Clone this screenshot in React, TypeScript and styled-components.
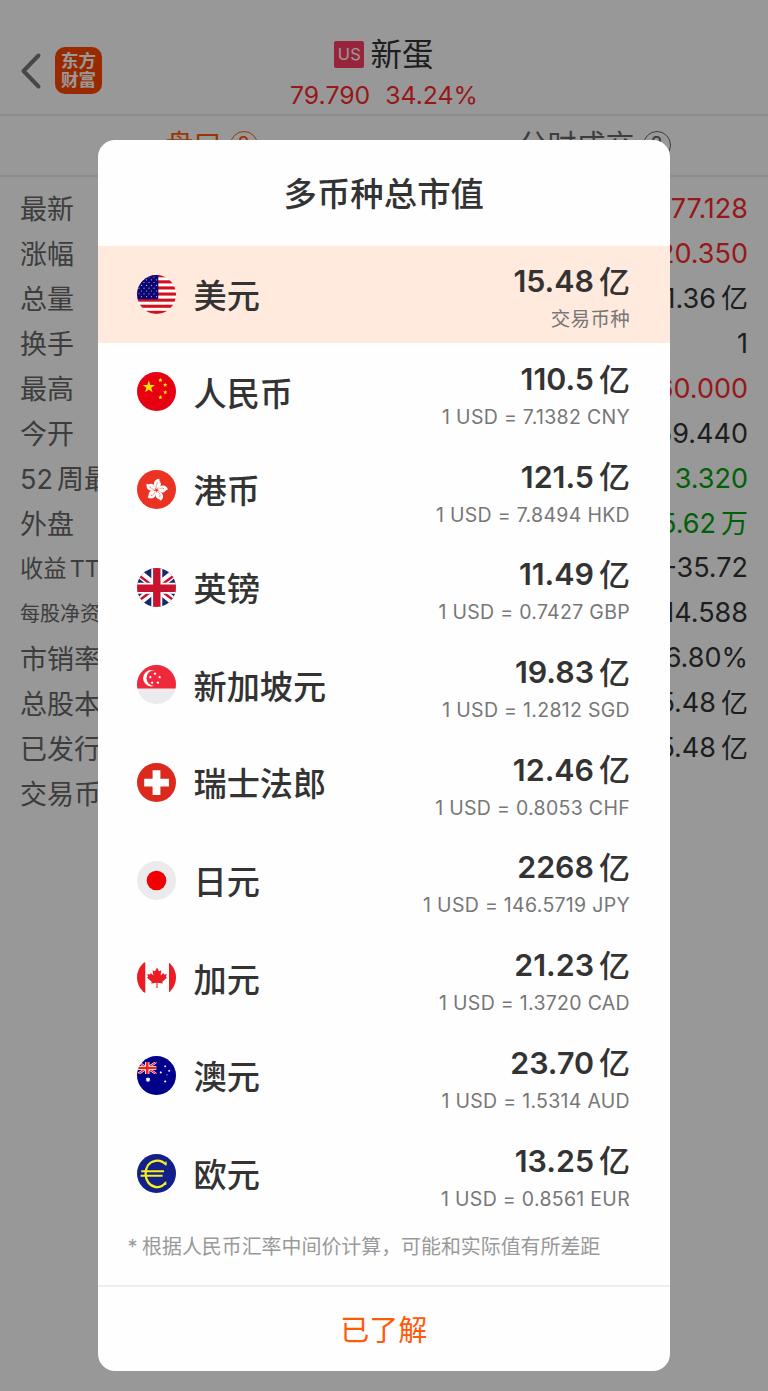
import React from 'react';
import styled, { createGlobalStyle } from 'styled-components';

const GlobalStyle = createGlobalStyle`
  * { box-sizing: border-box; }
  body {
    margin: 0;
    background: #fff;
    font-family: Inter, "Noto Sans CJK SC", sans-serif;
    color: #333;
  }
`;

const Screen = styled.div`
  position: relative;
  width: 768px;
  height: 1391px;
  overflow: hidden;
  background: #fefefe;
`;

const Header = styled.header`
  display: grid;
  grid-template-columns: 120px 1fr 120px;
  height: 116px;
  padding-top: 36px;
  border-bottom: 2px solid #ececee;
`;

const HeaderLeft = styled.div`
  display: flex;
  align-items: flex-start;
  gap: 13px;
  padding: 10.5px 0 0 19px;
`;

const BackIcon = styled.svg`
  width: 23px;
  height: 40px;
  margin-top: 4px;
  fill: none;
  stroke: #777;
  stroke-width: 4;
  stroke-linecap: round;
  stroke-linejoin: round;
`;

const Logo = styled.div`
  display: grid;
  place-content: center;
  width: 47px;
  height: 47px;
  border-radius: 10px;
  background: #ff4600;
  color: #fff;
  font-size: 17.5px;
  font-weight: 700;
  line-height: 19px;
`;

const Quote = styled.div`
  display: flex;
  flex-direction: column;
  align-items: center;
`;

const StockName = styled.div`
  display: flex;
  align-items: center;
  gap: 6px;
  height: 37px;
  font-size: 31.5px;
  line-height: 37px;
`;

const Market = styled.span`
  width: 30px;
  height: 27px;
  border-radius: 2px;
  background: #fc3d62;
  color: #fff;
  font-size: 16.5px;
  line-height: 27px;
  letter-spacing: 0.4px;
  text-align: center;
`;

const StockPrice = styled.div`
  display: flex;
  gap: 15px;
  color: #fa2a2c;
  font-size: 24.8px;
  line-height: 30px;
  margin-top: 7px;
`;

const Tabs = styled.nav`
  display: grid;
  grid-template-columns: 1fr 1fr;
  height: 61px;
  border-bottom: 2px solid #ececee;
`;

const Tab = styled.div<{ $active?: boolean }>`
  display: flex;
  align-items: flex-start;
  justify-content: center;
  padding-left: ${(p) => (p.$active ? 3 : 1)}px;
  color: ${(p) => (p.$active ? '#ff5a0a' : '#666')};
  font-size: ${(p) => (p.$active ? 28 : 29)}px;
  line-height: 59px;
`;

const TabLabel = styled.span`
  position: relative;
`;

const Help = styled.span`
  position: absolute;
  left: calc(100% + 8px);
  top: 50%;
  width: 28px;
  height: 28px;
  margin-top: -15px;
  border: 1.5px solid currentColor;
  border-radius: 50%;
  font-size: 21px;
  line-height: 26px;
  text-align: center;
`;

const Stats = styled.dl`
  margin: 0;
  padding: 9px 20px 0;
`;

const Stat = styled.div`
  display: flex;
  align-items: center;
  justify-content: space-between;
  height: 44.95px;
`;

const StatLabel = styled.dt<{ $size?: number }>`
  padding-bottom: 1px;
  color: #666;
  font-size: ${(p) => p.$size ?? 27}px;
  word-spacing: -3.5px;
`;

const StatValue = styled.dd<{ $tone?: 'up' | 'down' }>`
  display: flex;
  align-items: center;
  margin: 0;
  font-size: 27px;
  color: ${(p) => (p.$tone === 'up' ? '#fa2a2c' : p.$tone === 'down' ? '#00a00a' : '#333')};
`;

const Unit = styled.span`
  margin: -3px 0 0 5px;
`;

const Overlay = styled.div`
  position: absolute;
  inset: 0;
  display: flex;
  align-items: flex-start;
  padding: 140px 98.5px 0 98px;
  background: rgba(0, 0, 0, 0.4);
`;

const Dialog = styled.section`
  flex: 1;
  height: 1231px;
  display: flex;
  flex-direction: column;
  border-radius: 17px;
  background: #fefefe;
  overflow: hidden;
`;

const Title = styled.h1`
  margin: 0;
  height: 105.5px;
  font-size: 33.4px;
  font-weight: 500;
  line-height: 108px;
  text-align: center;
`;

const Row = styled.div<{ $selected?: boolean }>`
  display: flex;
  align-items: center;
  height: 97.7px;
  padding: 0 39.5px 0 39px;
  background: ${(p) => (p.$selected ? '#ffeadd' : 'transparent')};
`;

const Flag = styled.svg`
  width: 39px;
  height: 39px;
  margin-top: -0.4px;
`;

const Name = styled.span`
  margin-left: 17.5px;
  padding-bottom: 2px;
  font-size: 33.2px;
  font-weight: 500;
`;

const Amounts = styled.div`
  display: flex;
  flex-direction: column;
  align-items: flex-end;
  margin-left: auto;
  padding-top: 12px;
`;

const Amount = styled.div`
  display: flex;
  align-items: center;
  height: 38px;
  font-size: 30.4px;
  font-weight: 600;
`;

const AmountUnit = styled.span`
  margin: -4px 0 0 5px;
  font-size: 31px;
  font-weight: 500;
`;

const Rate = styled.div`
  height: 38px;
  color: #777;
  font-size: 19.5px;
  line-height: 39px;
  letter-spacing: 0.3px;
`;

const Note = styled.p`
  margin: 0;
  padding-left: 29.5px;
  height: 63px;
  color: #999;
  font-size: 19.93px;
  line-height: 51px;
  word-spacing: -1px;
  white-space: nowrap;
`;

const Confirm = styled.button`
  flex: 1;
  padding: 0 0 3px;
  border: 0;
  border-top: 2px solid #eee;
  background: transparent;
  color: #ff5a0a;
  font: inherit;
  font-size: 29px;
`;

const starPoints = (cx: number, cy: number, r: number, n = 5, inner = 0.4, rot = -90) =>
  Array.from({ length: n * 2 }, (_, i) => {
    const a = ((rot + (i * 180) / n) * Math.PI) / 180;
    const q = i % 2 ? r * inner : r;
    return `${(cx + q * Math.cos(a)).toFixed(2)},${(cy + q * Math.sin(a)).toFixed(2)}`;
  }).join(' ');

const UnionJack = () => (
  <>
    <rect width="39" height="39" fill="#16296b" />
    <path d="M0 4L39 35M39 4L0 35" stroke="#fff" strokeWidth="8" />
    <path d="M0 6L16 18M39 6L23 18M0 34L16 22M39 34L23 22" stroke="#c8142f" strokeWidth="2.4" />
    <path d="M19.8 0V39M0 20.2H39" stroke="#fff" strokeWidth="11" />
    <path d="M19.8 0V39M0 20.2H39" stroke="#c8142f" strokeWidth="7.4" />
  </>
);

const art: Record<string, React.ReactNode> = {
  us: (
    <>
      <rect width="39" height="39" fill="#fff" />
      {[0, 1, 2, 3, 4, 5, 6].map((i) => (
        <rect key={i} y={-0.8 + i * 6.1} width="39" height="3.1" fill="#d4101c" />
      ))}
      <rect width="21.3" height="24.3" fill="#0b0672" />
      {[0, 1, 2, 3, 4, 5, 6, 7].map((r) =>
        [0, 1, 2, 3].map((c) => (
          <circle key={`${r}-${c}`} cx={2 + c * 5 + (r % 2) * 2.5} cy={2 + r * 2.8} r="0.62" fill="#b9b6df" />
        )),
      )}
    </>
  ),
  cn: (
    <>
      <rect width="39" height="39" fill="#e60012" />
      <g fill="#ffe600">
        <polygon points={starPoints(11.8, 15, 6.4)} />
        <polygon points={starPoints(23.4, 8.2, 2.2, 5, 0.5)} />
        <polygon points={starPoints(28.2, 13, 2.2, 5, 0.5)} />
        <polygon points={starPoints(28.2, 20.3, 2.2, 5, 0.5)} />
        <polygon points={starPoints(23.4, 25.3, 2.2, 5, 0.5)} />
      </g>
    </>
  ),
  hk: (
    <>
      <rect width="39" height="39" fill="#ea3323" />
      {[0, 72, 144, 216, 288].map((a) => (
        <g key={a} transform={`translate(19.5 20) rotate(${a + 8})`}>
          <path d="M0 -1C-5 -4 -4.5 -10.5 1.5 -11.5C0.5 -9.5 4.5 -8 3.5 -4.8C2.8 -2.6 1 -2 0 -1Z" fill="#fff" />
          <path d="M0 -2C-1.4 -4 -1.2 -6 -0.2 -7.2" fill="none" stroke="#ea3323" strokeWidth="0.4" />
          <circle cx="0" cy="-7.2" r="0.45" fill="#ea3323" />
        </g>
      ))}
    </>
  ),
  gb: <UnionJack />,
  sg: (
    <>
      <rect width="39" height="39" fill="#ebebed" />
      <rect width="39" height="23.5" fill="#f0283c" />
      <circle cx="14.3" cy="13.2" r="8.2" fill="#fff" />
      <circle cx="17.4" cy="13.2" r="7.9" fill="#f0283c" />
      {[0, 72, 144, 216, 288].map((a) => {
        const t = ((a - 90) * Math.PI) / 180;
        return (
          <polygon key={a} fill="#fff" points={starPoints(18 + 4.9 * Math.cos(t), 13.6 + 4.9 * Math.sin(t), 1.7, 5, 0.5)} />
        );
      })}
    </>
  ),
  ch: (
    <>
      <rect width="39" height="39" fill="#dc291e" />
      <path d="M19.5 7.3V32M7.2 19.6H31.9" stroke="#fff" strokeWidth="7.8" />
    </>
  ),
  jp: (
    <>
      <rect width="39" height="39" fill="#ebebed" />
      <circle cx="19.5" cy="19.5" r="9.8" fill="#f00000" />
    </>
  ),
  ca: (
    <>
      <rect width="39" height="39" fill="#fefefe" />
      <path d="M0 4.2H8.3V34.8H0ZM32 4.2H39V34.8H32Z" fill="#ec1c24" />
      <path
        transform="translate(20 19.6)"
        d="M0 -10L2 -6.3L4.4 -7.4L3.6 -2.2L6.3 -4.6L7 -3.2L9.8 -3.6L8.9 -0.8L10 0.2L5.3 4.2L5.8 6L0.5 5.2L0.6 10.5H-0.6L-0.5 5.2L-5.8 6L-5.3 4.2L-10 0.2L-8.9 -0.8L-9.8 -3.6L-7 -3.2L-6.3 -4.6L-3.6 -2.2L-4.4 -7.4L-2 -6.3Z"
        fill="#ec1c24"
      />
    </>
  ),
  au: (
    <>
      <rect width="39" height="39" fill="#00008b" />
      <svg x="1" y="6" width="18.5" height="12" viewBox="0 0 39 26" preserveAspectRatio="none">
        <path d="M0 0L39 26M39 0L0 26" stroke="#fff" strokeWidth="5" />
        <path d="M0 0L39 26M39 0L0 26" stroke="#f02020" strokeWidth="2.4" />
        <path d="M19.5 0V26M0 13H39" stroke="#fff" strokeWidth="9" />
        <path d="M19.5 0V26M0 13H39" stroke="#f02020" strokeWidth="5.4" />
      </svg>
      <g fill="#fff">
        <polygon points={starPoints(11, 23.6, 2.7, 7, 0.6)} />
        <polygon points={starPoints(28.2, 10.3, 1.4, 7, 0.5)} />
        <polygon points={starPoints(23.8, 16.5, 1.4, 7, 0.5)} />
        <polygon points={starPoints(32.2, 14.8, 1.4, 7, 0.5)} />
        <polygon points={starPoints(28.2, 25.5, 1.4, 7, 0.5)} />
        <polygon points={starPoints(30, 18.7, 0.9)} />
      </g>
    </>
  ),
  eu: (
    <>
      <rect width="39" height="39" fill="#14208a" />
      <g fill="none" stroke="#f5f01e" strokeWidth="2.3">
        <path d="M29 10.5C26 7.4 22 6.1 18.3 6.8C11.8 8 8.6 13.5 8.6 19.8C8.6 26.5 12.5 32 18.5 33C22.5 33.6 26.3 31.8 28.6 28.6" />
        <path d="M29 7.5V11.5M28.7 27.5V31" strokeWidth="1.2" />
        <path d="M4.2 17.3H27M3.6 21.8H25.6" strokeWidth="1.9" />
      </g>
    </>
  ),
};

const currencies = [
  { flag: 'us', name: '美元', amount: '15.48', rate: '交易币种' },
  { flag: 'cn', name: '人民币', amount: '110.5', rate: '1 USD = 7.1382 CNY' },
  { flag: 'hk', name: '港币', amount: '121.5', rate: '1 USD = 7.8494 HKD' },
  { flag: 'gb', name: '英镑', amount: '11.49', rate: '1 USD = 0.7427 GBP' },
  { flag: 'sg', name: '新加坡元', amount: '19.83', rate: '1 USD = 1.2812 SGD' },
  { flag: 'ch', name: '瑞士法郎', amount: '12.46', rate: '1 USD = 0.8053 CHF' },
  { flag: 'jp', name: '日元', amount: '2268', rate: '1 USD = 146.5719 JPY' },
  { flag: 'ca', name: '加元', amount: '21.23', rate: '1 USD = 1.3720 CAD' },
  { flag: 'au', name: '澳元', amount: '23.70', rate: '1 USD = 1.5314 AUD' },
  { flag: 'eu', name: '欧元', amount: '13.25', rate: '1 USD = 0.8561 EUR' },
];

type StatItem = { label: string; value: string; unit?: string; tone?: 'up' | 'down'; size?: number };

const stats: StatItem[] = [
  { label: '最新', value: '77.128', tone: 'up' },
  { label: '涨幅', value: '20.350', tone: 'up' },
  { label: '总量', value: '1.36', unit: '亿' },
  { label: '换手', value: '1' },
  { label: '最高', value: '60.000', tone: 'up' },
  { label: '今开', value: '59.440' },
  { label: '52 周最', value: '3.320', tone: 'down' },
  { label: '外盘', value: '5.62', unit: '万', tone: 'down' },
  { label: '收益 TTM', value: '-35.72', size: 23.3 },
  { label: '每股净资', value: '14.588', size: 20 },
  { label: '市销率', value: '6.80%' },
  { label: '总股本', value: '5.48', unit: '亿' },
  { label: '已发行', value: '5.48', unit: '亿' },
  { label: '交易币', value: '' },
];

export default function App() {
  return (
    <Screen>
      <GlobalStyle />
      <Header>
        <HeaderLeft>
          <BackIcon viewBox="0 0 23 40">
            <path d="M19.5 4.5L4.5 20L19.5 35.5" />
          </BackIcon>
          <Logo>
            <span>东方</span>
            <span>财富</span>
          </Logo>
        </HeaderLeft>
        <Quote>
          <StockName>
            <Market>US</Market>
            新蛋
          </StockName>
          <StockPrice>
            <span>79.790</span>
            <span>34.24%</span>
          </StockPrice>
        </Quote>
      </Header>
      <Tabs>
        <Tab $active>
          <TabLabel>
            盘口<Help>?</Help>
          </TabLabel>
        </Tab>
        <Tab>
          <TabLabel>
            分时成交<Help>?</Help>
          </TabLabel>
        </Tab>
      </Tabs>
      <Stats>
        {stats.map((s) => (
          <Stat key={s.label}>
            <StatLabel $size={s.size}>{s.label}</StatLabel>
            <StatValue $tone={s.tone}>
              {s.value}
              {s.unit && <Unit>{s.unit}</Unit>}
            </StatValue>
          </Stat>
        ))}
      </Stats>
      <Overlay>
        <Dialog role="dialog">
          <Title>多币种总市值</Title>
          {currencies.map((c, i) => (
            <Row key={c.flag} $selected={i === 0}>
              <Flag viewBox="0 0 39 39">
                <clipPath id={`clip-${c.flag}`}>
                  <circle cx="19.5" cy="19.5" r="19.5" />
                </clipPath>
                <g clipPath={`url(#clip-${c.flag})`}>{art[c.flag]}</g>
              </Flag>
              <Name>{c.name}</Name>
              <Amounts>
                <Amount>
                  {c.amount}
                  <AmountUnit>亿</AmountUnit>
                </Amount>
                <Rate>{c.rate}</Rate>
              </Amounts>
            </Row>
          ))}
          <Note>* 根据人民币汇率中间价计算，可能和实际值有所差距</Note>
          <Confirm>已了解</Confirm>
        </Dialog>
      </Overlay>
    </Screen>
  );
}
